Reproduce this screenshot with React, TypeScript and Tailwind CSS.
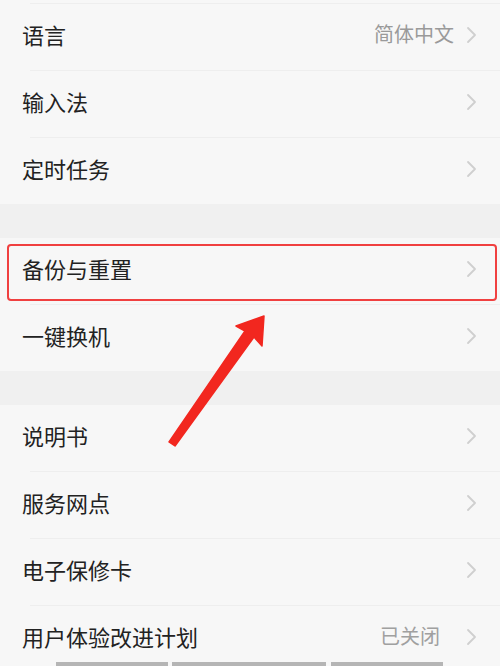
import React from "react";

const Chevron = () => (
  <svg width="12" height="18" viewBox="0 0 12 18" className="shrink-0">
    <path d="M2 2 L9 9 L2 16" fill="none" stroke="#cfcfcf" strokeWidth="1.8" strokeLinecap="round" strokeLinejoin="round" />
  </svg>
);

const Row = ({ label, value, valueGap, last, children }: { label: string; value?: string; valueGap?: boolean; last?: boolean; children?: React.ReactNode }) => (
  <div className="relative">
    <div className="h-[66px] flex items-center pl-[22px] pr-[22px]">
      <span className="text-[22px] text-[#222222] flex-1 leading-none mb-[6px]">{label}</span>
      {value && (
        <span className={valueGap ? "text-[20px] text-[#a0a0a0] mr-[26px] leading-none mb-[6px]" : "text-[20px] text-[#9a9a9a] mr-[12px] leading-none mb-[6px]"}>
          {value}
        </span>
      )}
      <div className="mb-[4px]">
        <Chevron />
      </div>
    </div>
    {!last && <div className="h-px bg-[#eeeeee] ml-[30px]" />}
    {children}
  </div>
);

export default function App() {
  return (
    <div
      className="relative w-[500px] h-[666px] overflow-hidden bg-[#f0f0f0]"
      style={{ fontFamily: '"Noto Sans CJK SC", "Noto Sans", sans-serif' }}
    >
      <div className="bg-[#f7f7f7] pt-[4px]">
        <div className="h-px bg-[#eeeeee] ml-[30px] -mt-[1px]" />
        <Row label="语言" value="简体中文" />
        <Row label="输入法" />
        <Row label="定时任务" last />
      </div>
      <div className="h-[34px]" />
      <div className="bg-[#f7f7f7]">
        <Row label="备份与重置">
          <div className="absolute left-[7px] right-[3px] top-[6px] bottom-[4px] border-2 border-[#f04040] rounded-[4px]" />
        </Row>
        <Row label="一键换机" last />
      </div>
      <div className="h-[34px]" />
      <div className="bg-[#f7f7f7]">
        <Row label="说明书" />
        <Row label="服务网点" />
        <Row label="电子保修卡" />
        <Row label="用户体验改进计划" value="已关闭" valueGap last />
      </div>

      <svg className="absolute left-0 top-0" width="500" height="666" viewBox="0 0 500 666">
        <path
          d="M169 442 L175 446 L254 337 L262 346 L264 316 L236 326 L245 331 Z"
          fill="#f2271f"
          stroke="#f2271f"
          strokeWidth="1.5"
          strokeLinejoin="round"
        />
      </svg>

      <div className="absolute left-[56px] top-[662px] w-[112px] h-[4px] bg-[#b5b5b5]" />
      <div className="absolute left-[172px] top-[662px] w-[154px] h-[4px] bg-[#b5b5b5]" />
      <div className="absolute left-[331px] top-[662px] w-[112px] h-[4px] bg-[#b5b5b5]" />
    </div>
  );
}
